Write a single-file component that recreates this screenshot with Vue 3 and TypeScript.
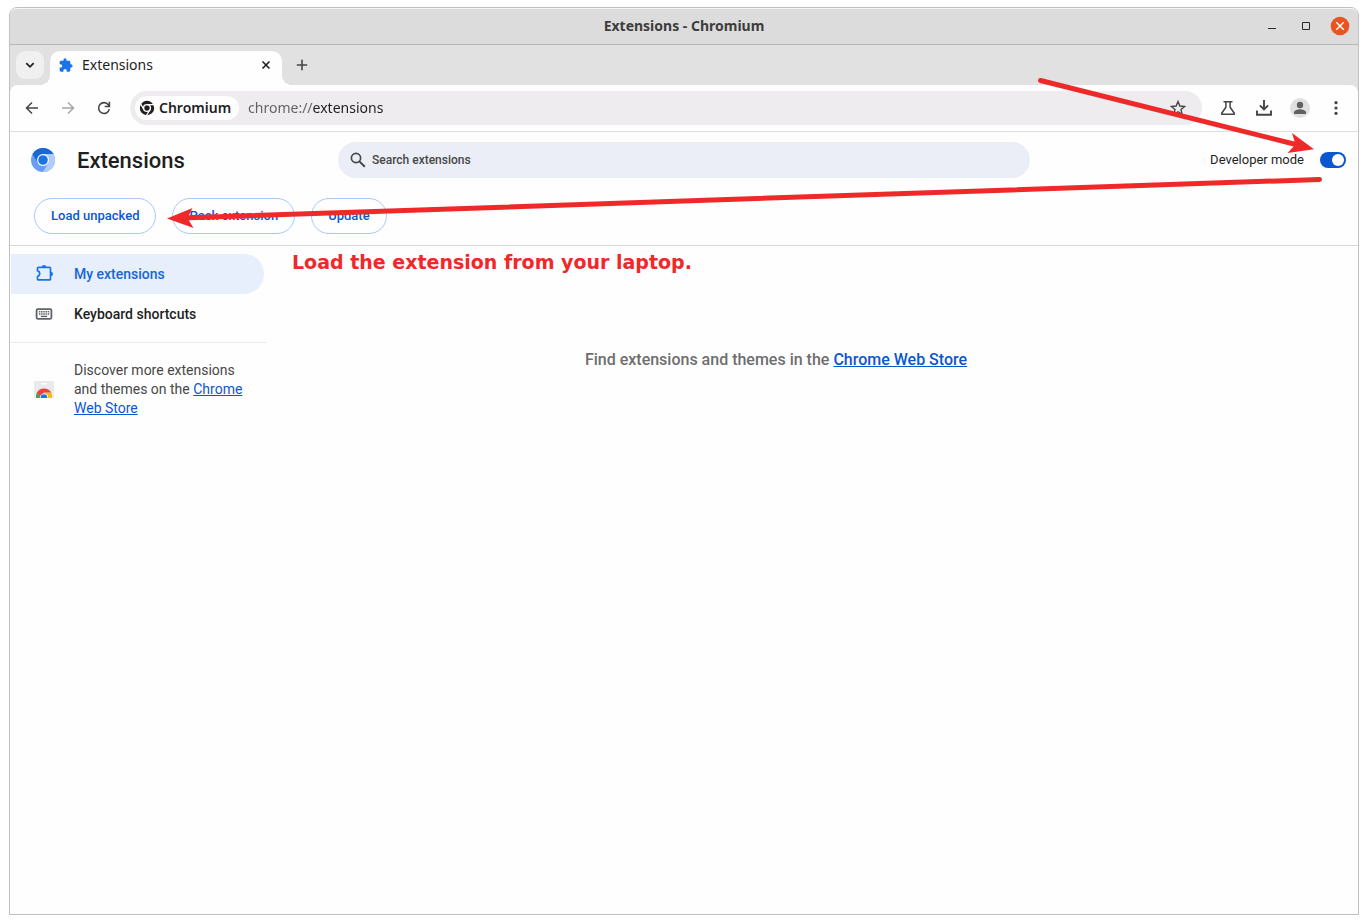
<script setup lang="ts">
import { ref } from 'vue'

const developerMode = ref(true)
const query = ref('')
const address = ref('chrome://extensions')
const actions: string[] = ['Load unpacked', 'Pack extension', 'Update']
</script>

<template>
  <div class="window">
    <header class="titlebar">
      <div class="window-title">Extensions - Chromium</div>
      <div class="window-controls">
        <button type="button" aria-label="Minimize">
          <svg width="20" height="20" viewBox="0 0 20 20"><path d="M6 12.5h8" stroke="#2b2b2b" /></svg>
        </button>
        <button type="button" aria-label="Maximize">
          <svg width="20" height="20" viewBox="0 0 20 20"><path d="M6.5 6.5h7v7h-7z" fill="none" stroke="#2b2b2b" /></svg>
        </button>
        <button type="button" aria-label="Close window">
          <svg width="20" height="20" viewBox="0 0 20 20">
            <circle cx="10" cy="10" r="9.3" fill="#e95420" />
            <path d="M6.3 6.3l7.4 7.4M13.7 6.3l-7.4 7.4" stroke="#fff" stroke-width="1.4" />
          </svg>
        </button>
      </div>
    </header>

    <nav class="tabstrip" aria-label="Tabs">
      <button type="button" class="tab-search" aria-label="Search tabs">
        <svg width="16" height="16" viewBox="0 0 16 16"><path d="M4.3 6.1L8 9.8l3.7-3.7" fill="none" stroke="#1f1f1f" stroke-width="1.7" /></svg>
      </button>
      <div class="tab">
        <svg width="16" height="16" viewBox="0 0 24 24" fill="#1a73e8">
          <path d="M19.500 11H18.500V7.500c0-1.100-.9-2-2-2h-3.700V4.300a2.300 2.300 0 0 0-4.600 0V5.500H4.500c-1.100 0-2 .9-2 2v3.400h1.300a2.500 2.500 0 0 1 0 5H2.500V20c0 1.100.9 2 2 2h3.600v-1.400a2.500 2.500 0 0 1 5 0V22h3.400c1.100 0 2-.9 2-2v-4.300h1a2.350 2.350 0 0 0 0-4.700z" />
        </svg>
        <span class="tab-title">Extensions</span>
        <button type="button" aria-label="Close tab">
          <svg width="16" height="16" viewBox="0 0 16 16"><path d="M4.500 4.500l7 7M11.500 4.500l-7 7" stroke="#1f1f1f" stroke-width="1.600" /></svg>
        </button>
      </div>
      <button type="button" class="new-tab" aria-label="New tab">
        <svg width="16" height="16" viewBox="0 0 16 16"><path d="M8 2.800v10.400M2.800 8h10.400" stroke="#444" stroke-width="1.600" /></svg>
      </button>
    </nav>

    <div class="toolbar">
      <button type="button" class="tool" aria-label="Back">
        <svg width="20" height="20" viewBox="0 0 20 20"><path d="M16 10H5M10 4.500L4.500 10l5.500 5.500" fill="none" stroke="#454545" stroke-width="1.500" /></svg>
      </button>
      <button type="button" class="tool" aria-label="Forward">
        <svg width="20" height="20" viewBox="0 0 20 20"><path d="M4 10h11M10 4.500l5.500 5.500-5.500 5.500" fill="none" stroke="#a6a6a6" stroke-width="1.500" /></svg>
      </button>
      <button type="button" class="tool" aria-label="Reload">
        <svg width="20" height="20" viewBox="0 0 20 20" fill="none" stroke="#454545" stroke-width="1.600">
          <path d="M15.300 11.200A5.400 5.400 0 1 1 14.400 6.900L15.500 8.300M15.400 3.800v4.700h-4.700" />
        </svg>
      </button>
      <div class="omnibox">
        <span class="chip">
          <svg width="16" height="16" viewBox="0 0 16 16">
            <circle cx="8" cy="8" r="7.200" fill="#1f1f1f" />
            <circle cx="8" cy="8" r="3.400" fill="none" stroke="#fff" stroke-width="1.400" />
            <path d="M8 4.600h7M5 9.700L1.600 3.700M11 9.700L7.400 15.500" stroke="#fff" stroke-width="1.300" />
          </svg>
          Chromium
        </span>
        <input v-model="address" class="address" type="text" aria-label="Address" spellcheck="false" />
        <button type="button" class="star" aria-label="Bookmark this tab">
          <svg width="20" height="20" viewBox="0 0 20 20">
            <path d="M10 3.600l1.850 4.450 4.750.4-3.600 3.100 1.100 4.700L10 13.750 5.900 16.250 7 11.550 3.400 8.450l4.750-.4z" fill="none" stroke="#454545" stroke-width="1.400" />
          </svg>
        </button>
      </div>
      <button type="button" class="tool" aria-label="Experiments">
        <svg width="20" height="20" viewBox="0 0 20 20"><path d="M5.500 3.700h9M7.900 4v5.300L3.700 15.200q-.5 1.100.7 1.100h11.200q1.200 0 .7-1.100L12.100 9.300V4" fill="none" stroke="#454545" stroke-width="1.500" /></svg>
      </button>
      <button type="button" class="tool" aria-label="Downloads">
        <svg width="20" height="20" viewBox="0 0 20 20"><path d="M10 2v9M5.900 7.400L10 11.500l4.100-4.100M3 12.500v4.300h14v-4.300" fill="none" stroke="#454545" stroke-width="1.900" /></svg>
      </button>
      <button type="button" class="tool" aria-label="Profile">
        <svg width="20" height="20" viewBox="0 0 20 20">
          <circle cx="10" cy="10" r="10" fill="#e0e0e0" />
          <circle cx="10" cy="7" r="3.200" fill="#5f6062" />
          <path d="M4 16v-1.500c0-2 4-3.200 6-3.200s6 1.200 6 3.200V16z" fill="#5f6062" />
        </svg>
      </button>
      <button type="button" class="tool" aria-label="Menu">
        <svg width="20" height="20" viewBox="0 0 20 20" fill="#454545"><circle cx="10" cy="4.700" r="1.600" /><circle cx="10" cy="10" r="1.600" /><circle cx="10" cy="15.300" r="1.600" /></svg>
      </button>
    </div>

    <div class="page-header">
      <div class="brand">
        <svg width="24" height="24" viewBox="0 0 24 24">
          <circle cx="12" cy="12" r="12" fill="#669df6" />
          <path d="M12 6h10.400A12 12 0 0 1 12 24l5.200-9z" fill="#aecbfa" />
          <path d="M1.600 6a12 12 0 0 1 20.800 0H12L6.800 15z" fill="#1967d2" />
          <circle cx="12" cy="12" r="6" fill="#fff" />
          <circle cx="12" cy="12" r="4.800" fill="#1a73e8" />
        </svg>
        <h1>Extensions</h1>
      </div>
      <label class="search">
        <svg width="20" height="20" viewBox="0 0 20 20" fill="none" stroke="#444746">
          <circle cx="8" cy="8" r="4.600" stroke-width="1.700" />
          <path d="M11.400 11.400l5.400 5.400" stroke-width="2" />
        </svg>
        <input v-model="query" type="search" placeholder="Search extensions" aria-label="Search extensions" />
      </label>
      <label class="dev-mode">
        Developer mode
        <input v-model="developerMode" type="checkbox" role="switch" />
      </label>
    </div>

    <div class="actions">
      <button v-for="action in actions" :key="action" type="button">{{ action }}</button>
    </div>

    <div class="content">
      <aside>
        <nav class="menu" aria-label="Extensions sections">
          <a href="#extensions" class="active">
            <svg width="20" height="20" viewBox="0 0 20 20">
              <path d="M4.500 3.300H15.500a1 1 0 0 1 1 1V14.900a1 1 0 0 1-1 1H4.500a1 1 0 0 1-1-1V12.600Q5.800 11.700 5.800 9.600T3.500 6.600V4.300a1 1 0 0 1 1-1z" fill="none" stroke="#1a73e8" stroke-width="1.700" />
              <path d="M7.800 3.300a2.200 2.200 0 0 1 4.400 0zM16.800 7.700a2.200 2.200 0 0 1 0 4.400z" fill="#1a73e8" />
            </svg>
            My extensions
          </a>
          <a href="#shortcuts">
            <svg width="20" height="20" viewBox="0 0 20 20">
              <rect x="2.600" y="5.200" width="14.800" height="9.600" rx="1.200" fill="none" stroke="#5f6368" stroke-width="1.800" />
              <path d="M4.900 7.700h10.400M4.900 10h10.400" stroke="#5f6368" stroke-width="1.500" stroke-dasharray="1.500 .7" />
              <path d="M6.800 12.400h6.400" stroke="#5f6368" stroke-width="1.400" />
            </svg>
            Keyboard shortcuts
          </a>
        </nav>
        <div class="discover">
          <svg width="20" height="20" viewBox="0 0 20 20">
            <path d="M0 1h20v16a1 1 0 0 1-1 1H1a1 1 0 0 1-1-1z" fill="#e8eaed" />
            <rect x="7" y="3" width="6" height="1.500" rx=".75" fill="#fff" />
            <path d="M3 12.500L7 18H2a8.500 8.500 0 0 1 1-5.500z" fill="#34a853" />
            <path d="M10 12.600h7.200A8.500 8.500 0 0 1 18 18h-6z" fill="#fbbc04" />
            <path d="M2.900 12.600a8.200 8.200 0 0 1 14.300 0H10L6 17z" fill="#ea4335" />
            <path d="M5.800 18a4.200 4.200 0 0 1 8.400-.6V18z" fill="#fff" />
            <path d="M6.700 18a3.300 3.300 0 0 1 6.600-.8V18z" fill="#1a73e8" />
          </svg>
          <p>Discover more extensions and themes on the <a href="#store">Chrome Web Store</a></p>
        </div>
      </aside>
      <main>
        <p>Find extensions and themes in the <a href="#store">Chrome Web Store</a></p>
      </main>
    </div>

    <p class="note">Load the extension from your laptop.</p>
    <svg class="arrows" width="1368" height="300" viewBox="0 0 1368 300" aria-hidden="true">
      <g stroke="#ef2929" stroke-width="5" stroke-linecap="round">
        <path d="M1040.500 80.500L1298 145" />
        <path d="M1319.500 179.500L188 217.800" />
      </g>
      <g fill="#ef2929">
        <path d="M1314 149.200L1292 133l3.500 11.500L1287.500 153z" />
        <path d="M167 218.500L192.500 208l-5 10L193.500 228z" />
      </g>
    </svg>
  </div>
</template>

<style>
body {
  margin: 0;
  background: #fff;
}
</style>

<style scoped>
* {
  box-sizing: border-box;
}

.window {
  display: flex;
  flex-direction: column;
  min-height: calc(100vh - 16px);
  margin: 7px 9px 9px;
  border: 1px solid #c0c0c0;
  border-radius: 8px 8px 0 0;
  background: #fefefe;
  font-family: Roboto, "Liberation Sans", sans-serif;
  color: #1f1f1f;
}

button {
  display: flex;
  align-items: center;
  justify-content: center;
  padding: 0;
  border: 0;
  background: none;
  font: inherit;
  color: inherit;
}

svg {
  display: block;
  flex: none;
}

h1,
p {
  margin: 0;
}

a {
  color: #0b57d0;
}

input {
  margin: 0;
  border: 0;
  outline: 0;
}

.titlebar {
  display: grid;
  grid-template-columns: 1fr auto 1fr;
  align-items: center;
  height: 37px;
  padding-bottom: 1px;
  border-top: 1px solid #f4f4f4;
  border-bottom: 1px solid #b8b8b8;
  border-radius: 7px 7px 0 0;
  background: #dcdcdc;
}

.window-title {
  grid-column: 2;
  font: bold 14px/20px "Noto Sans", sans-serif;
  color: #3d3d3d;
}

.window-controls {
  display: flex;
  justify-content: flex-end;
  padding-right: 1px;
}

.window-controls button {
  width: 34px;
  height: 34px;
}

.tabstrip {
  display: flex;
  height: 40px;
  padding: 6px 6px 0;
  background: #e1e1e1;
  font: 14px/20px "Noto Sans", sans-serif;
}

.tab-search {
  width: 28px;
  height: 28px;
  border-radius: 9px;
  background: #f0f0f0;
}

.tab {
  position: relative;
  display: flex;
  align-items: center;
  width: 232px;
  height: 34px;
  margin-left: 6px;
  padding: 0 8px 6px;
  border-radius: 10px 10px 0 0;
  background: #fefefe;
}

.tab::before,
.tab::after {
  content: "";
  position: absolute;
  bottom: 0;
  width: 10px;
  height: 10px;
}

.tab::before {
  right: 100%;
  background: radial-gradient(circle at 0 0, transparent 10px, #fefefe 10px);
}

.tab::after {
  left: 100%;
  background: radial-gradient(circle at 100% 0, transparent 10px, #fefefe 10px);
}

.tab-title {
  flex: 1;
  padding-left: 8px;
}

.new-tab {
  width: 28px;
  height: 28px;
  margin-left: 6px;
}

.toolbar {
  display: flex;
  align-items: center;
  height: 47px;
  padding: 0 4px;
  border-bottom: 1px solid #dedede;
  background: linear-gradient(#e1e1e1, #e1e1e1) top / 100% 10px no-repeat;
  position: relative;
  z-index: 0;
}

.toolbar::before {
  content: "";
  position: absolute;
  inset: 0;
  z-index: -1;
  border-radius: 8px 8px 0 0;
  background: #fefefe;
}

.tool {
  width: 36px;
  height: 36px;
}

.omnibox {
  display: flex;
  flex: 1;
  align-items: center;
  height: 34px;
  margin: 0 8px;
  padding: 0 10px 0 5px;
  border-radius: 17px;
  background: #eeecee;
  font: 14px/20px "Noto Sans", sans-serif;
}

.chip {
  display: flex;
  align-items: center;
  gap: 4px;
  height: 24px;
  padding: 0 8px 0 4px;
  border-radius: 12px;
  background: #fefefe;
  font-weight: 600;
}

.address {
  flex: 1;
  min-width: 0;
  margin-left: 9px;
  padding: 0;
  font: inherit;
  color: transparent;
  caret-color: #1f1f1f;
  background: linear-gradient(to right, #606060 64px, #1f1f1f 64px);
  background-clip: text;
}

.star {
  width: 28px;
  height: 28px;
}

.page-header {
  display: flex;
  align-items: center;
  height: 56px;
  padding-right: 12px;
}

.brand {
  display: flex;
  flex: 0 0 328px;
  align-items: center;
  gap: 22px;
  padding-left: 21px;
}

h1 {
  padding-top: 2px;
  font-size: 22px;
  font-weight: 500;
  line-height: 28px;
}

.search {
  display: flex;
  flex: 0 1 692px;
  align-items: center;
  gap: 4px;
  height: 36px;
  padding: 0 10px;
  border-radius: 18px;
  background: #ebeef7;
}

.search input {
  flex: 1;
  min-width: 0;
  padding: 0;
  background: none;
  font: 500 12px/16px Roboto, sans-serif;
  color: #474747;
}

.search input::placeholder {
  color: #474747;
}

.dev-mode {
  display: flex;
  align-items: center;
  gap: 16px;
  margin-left: auto;
  font-size: 13px;
  line-height: 20px;
  white-space: nowrap;
}

.dev-mode input {
  display: flex;
  align-items: center;
  width: 26px;
  height: 16px;
  padding: 2px;
  border-radius: 8px;
  background: #747775;
  appearance: none;
}

.dev-mode input::before {
  content: "";
  width: 12px;
  height: 12px;
  border-radius: 50%;
  background: #fff;
}

.dev-mode input:checked {
  justify-content: flex-end;
  background: #0b57d0;
}

.actions {
  display: flex;
  gap: 16px;
  height: 58px;
  padding: 10px 24px 0;
  border-bottom: 1px solid #d9d9dc;
}

.actions button {
  height: 36px;
  padding: 0 16px;
  border: 1px solid #a8c7fa;
  border-radius: 18px;
  font-size: 13px;
  font-weight: 500;
  line-height: 20px;
  color: #0b57d0;
}

.content {
  display: flex;
  flex: 1;
}

aside {
  flex: 0 0 256px;
  padding-top: 8px;
  font-size: 14px;
}

.menu {
  padding: 0 2px 8px 1px;
  border-bottom: 1px solid #ebebed;
}

.menu a {
  display: flex;
  align-items: center;
  gap: 20px;
  height: 40px;
  padding-left: 23px;
  border-radius: 0 20px 20px 0;
  font-weight: 500;
  color: #1f1f1f;
  text-decoration: none;
}

.menu a.active {
  background: #e7eefc;
  color: #1967d2;
}

.discover {
  display: flex;
  align-items: center;
  gap: 20px;
  padding: 18px 16px 18px 24px;
  line-height: 19px;
  color: #474747;
}

main {
  flex: 1;
  padding: 104px 72px 0 0;
  font-size: 16px;
  font-weight: 500;
  line-height: 20px;
  text-align: center;
  color: #6e6e6e;
}

.note {
  position: absolute;
  left: 292px;
  top: 250px;
  font: bold 19px/24px "DejaVu Sans", sans-serif;
  color: #ef2929;
}

.arrows {
  position: absolute;
  left: 0;
  top: 0;
  pointer-events: none;
}
</style>
